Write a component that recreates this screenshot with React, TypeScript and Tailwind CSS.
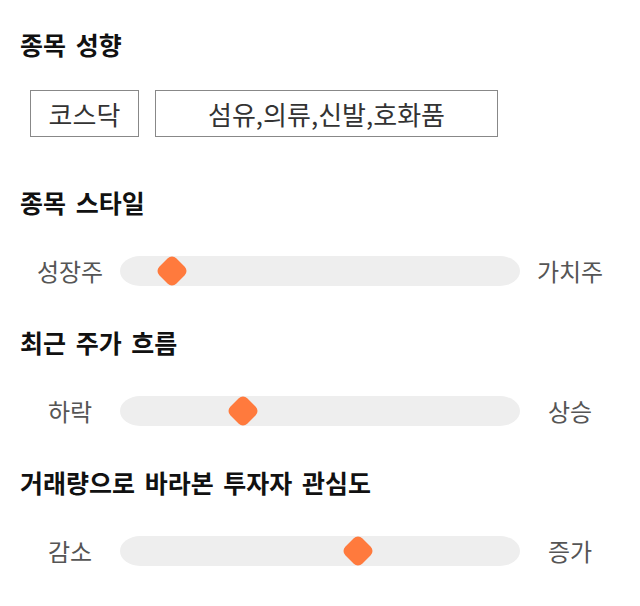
const font = "font-['Noto_Sans_CJK_KR','Noto_Sans',sans-serif]";

interface SliderRowProps {
  left: string;
  right: string;
  pos: number; // thumb center, px from track left
}

function SliderRow({ left, right, pos }: SliderRowProps) {
  return (
    <div className="flex items-center h-[30px]">
      <div className="w-[100px] text-center text-[24px] leading-[30px] text-[#555]">{left}</div>
      <div className="relative w-[400px] h-[30px] bg-[#eeeeee] rounded-[20px_/_15px]">
        {/* 썸: 둥근 마름모 */}
        <div
          className="absolute top-[3px] w-[24px] h-[24px] rotate-45 rounded-[6px] bg-[#ff7a3d]"
          style={{ left: pos - 12 }}
        />
      </div>
      <div className="w-[100px] text-center text-[24px] leading-[30px] text-[#555]">{right}</div>
    </div>
  );
}

function Heading({ children }: { children: React.ReactNode }) {
  return (
    <h2 className="text-[25px] leading-[32px] font-bold text-[#111] [word-spacing:4px]">{children}</h2>
  );
}

export default function App() {
  return (
    <div className={`${font} bg-white w-[640px] h-[606px] px-5 pt-[28px]`}>
      {/* 종목 성향 */}
      <Heading>종목 성향</Heading>
      <div className="flex gap-4 ml-[10px] mt-[30px]">
        <div className="w-[109px] h-[47px] border border-[#888] flex items-center justify-center text-[26px] text-[#333]">
          코스닥
        </div>
        <div className="w-[343px] h-[47px] border border-[#888] flex items-center justify-center text-[26px] text-[#333]">
          섬유,의류,신발,호화품
        </div>
      </div>

      {/* 종목 스타일 */}
      <div className="mt-[49px]">
        <Heading>종목 스타일</Heading>
        <div className="mt-[38px]">
          <SliderRow left="성장주" right="가치주" pos={52} />
        </div>
      </div>

      {/* 최근 주가 흐름 */}
      <div className="mt-[40px]">
        <Heading>최근 주가 흐름</Heading>
        <div className="mt-[38px]">
          <SliderRow left="하락" right="상승" pos={123} />
        </div>
      </div>

      {/* 거래량 */}
      <div className="mt-[40px]">
        <Heading>거래량으로 바라본 투자자 관심도</Heading>
        <div className="mt-[38px]">
          <SliderRow left="감소" right="증가" pos={238} />
        </div>
      </div>
    </div>
  );
}
